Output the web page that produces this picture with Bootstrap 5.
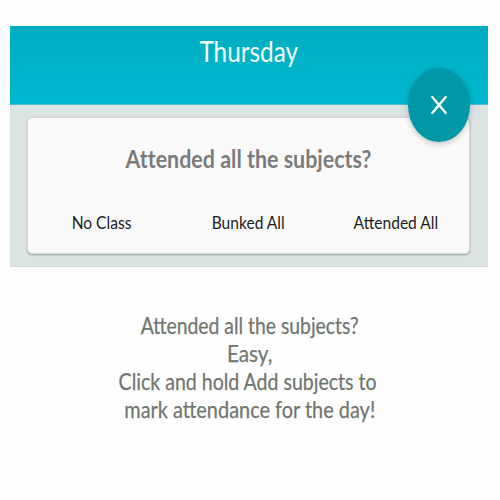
<!DOCTYPE html>
<html lang="en">
<head>
<meta charset="utf-8">
<meta name="viewport" content="width=device-width, initial-scale=1">
<title>Thursday</title>
<link href="https://cdn.jsdelivr.net/npm/bootstrap@5.3.0/dist/css/bootstrap.min.css" rel="stylesheet">
<style>
body{font-family:Lato,"Liberation Sans",sans-serif;overflow:hidden;background:#fefefe}
.screen{margin:26px 12px 0 10px;height:241px;background:#dce4e3;border-bottom:1px solid #d3dad9}
.topbar{height:79px;background:linear-gradient(#00adc1,#00b8d0);border-bottom:1px solid #45bfcb;color:#f4ffff}
.topbar h1{font-size:29px;line-height:34px;padding-top:8px}
.squeeze{display:inline-block;white-space:nowrap}
.w-title{transform:scaleX(.84)}
.w-ask{transform:scaleX(.875)}
.w-act{transform:scaleX(.865)}
.w-l1{transform:scaleX(.86)}
.w-l2{transform:scaleX(.92)}
.w-l3{transform:scaleX(.868)}
.w-l4{transform:scaleX(.885)}
.ask-card{margin:12px 18px 0 17px;height:137px;background:#fafafa;border:1px solid #d3d8d8;border-radius:5px;box-shadow:0 1px 2px rgba(0,0,0,.3)}
.ask-card h2{font-size:24.5px;line-height:28px;font-weight:700;color:#7b7b7b;padding-top:27px;font-variant-ligatures:none}
.actions{margin-top:35px}
.actions .btn{font-size:18px;line-height:28px;color:#1d1d1d;border:0}
.fab{left:408px;top:68px;width:62px;height:74px;background:#0097a7;border-radius:50%;box-shadow:0 2px 6px rgba(0,0,0,.22)}
.hint{margin-top:45px;font-size:22.5px;line-height:28.1px;color:#70756f;-webkit-text-stroke:.25px #70756f}
</style>
</head>
<body>
<main class="screen">
  <header class="topbar text-center"><h1 class="m-0 fw-normal"><span class="squeeze w-title">Thursday</span></h1></header>
  <section class="ask-card text-center">
    <h2 class="mb-0"><span class="squeeze w-ask">Attended all the subjects?</span></h2>
    <div class="actions row g-0">
      <div class="col-4"><button class="btn p-0 squeeze w-act">No Class</button></div>
      <div class="col-4"><button class="btn p-0 squeeze w-act">Bunked All</button></div>
      <div class="col-4"><button class="btn p-0 squeeze w-act">Attended All</button></div>
    </div>
  </section>
</main>
<button class="fab btn p-0 border-0 position-absolute d-flex align-items-center justify-content-center" aria-label="Close">
  <svg width="18" height="20" viewBox="0 0 18 20" fill="none" stroke="#fff" stroke-width="2.3" stroke-linecap="round"><path d="M2.3 2 15.7 18M15.7 2 2.3 18"/></svg>
</button>
<section class="hint text-center">
  <div><span class="squeeze w-l1">Attended all the subjects?</span></div>
  <div><span class="squeeze w-l2">Easy,</span></div>
  <div class="pe-1"><span class="squeeze w-l3">Click and hold Add subjects to</span></div>
  <div><span class="squeeze w-l4">mark attendance for the day!</span></div>
</section>
</body>
</html>
